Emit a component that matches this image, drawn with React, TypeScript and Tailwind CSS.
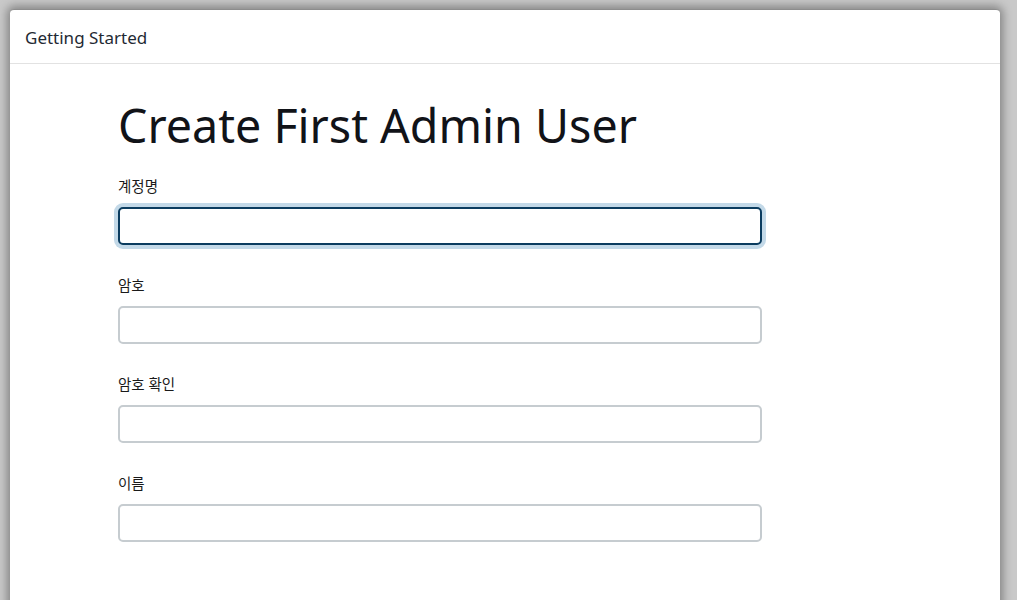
const fields = ["계정명", "암호", "암호 확인", "이름"];

export default function App() {
  return (
    <div
      className="h-[600px] w-[1017px] overflow-hidden bg-[#c9c9c9] pl-[10px] pt-[9px]"
      style={{ fontFamily: '"Noto Sans", "Noto Sans CJK KR", sans-serif' }}
    >
      <div className="h-[620px] w-[990px] rounded-t-[4px] border-t border-[#8d8d8d] bg-white shadow-[0_0_10px_3px_rgba(0,0,0,0.35)]">
        <div className="flex h-[54px] items-center border-b border-[#e2e2e2] px-[15px] pt-[2px] text-[17px] text-[#1f2a33]">
          Getting Started
        </div>
        <div className="pl-[108px] pt-[28px]">
          <h1 className="text-[46.6px] leading-[66px] font-normal text-[#111318]">
            Create First Admin User
          </h1>
          <div className="mt-[18px] flex flex-col gap-[30px]">
            {fields.map((label, i) => (
              <div key={label} className="flex flex-col gap-[11px]">
                <label className="text-[14.5px] leading-[20px] text-[#1a1a1a]">{label}</label>
                <input
                  type="text"
                  autoFocus={i === 0}
                  className={
                    i === 0
                      ? "h-[38px] w-[644px] rounded-[5px] border-2 border-[#0b3c5f] bg-white px-2 outline-none ring-4 ring-[#c3d9e8]"
                      : "h-[38px] w-[644px] rounded-[5px] border-2 border-[#c6ccd0] bg-white px-2 outline-none"
                  }
                />
              </div>
            ))}
          </div>
        </div>
      </div>
    </div>
  );
}
